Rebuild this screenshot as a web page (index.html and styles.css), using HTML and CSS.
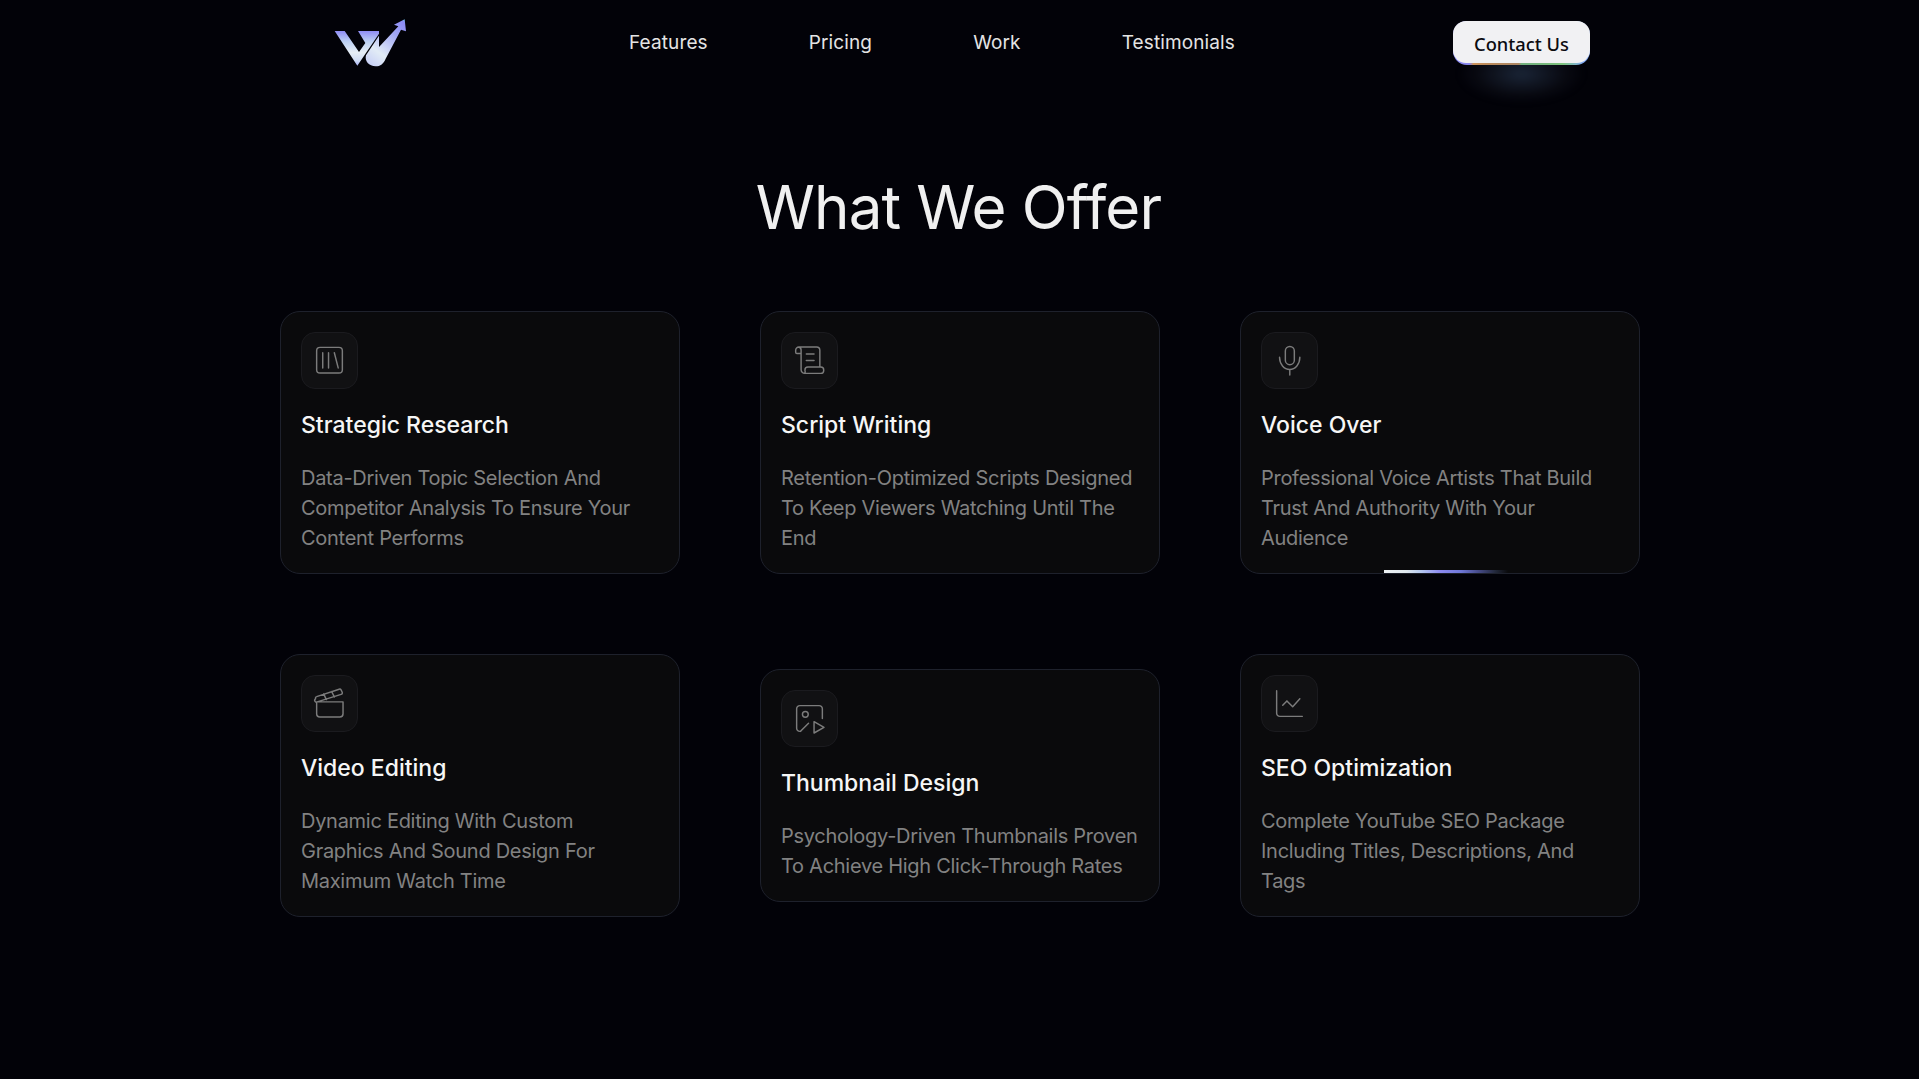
FILE: index.html
```html
<!DOCTYPE html>
<html lang="en">
<head>
<meta charset="utf-8">
<title>What We Offer</title>
<link rel="stylesheet" href="styles.css">
</head>
<body>
<header class="site-header">
  <a class="logo" href="#" aria-label="Home">
    <svg width="75" height="52" viewBox="100 50 225 156">
      <defs>
        <linearGradient id="lg" x1="0" y1="0" x2="0" y2="1">
          <stop offset="0" stop-color="#8f8cf5"/>
          <stop offset=".3" stop-color="#bcd0f2"/>
          <stop offset=".62" stop-color="#e6eef6"/>
          <stop offset=".85" stop-color="#cfdcf5"/>
          <stop offset="1" stop-color="#a9b2f6"/>
        </linearGradient>
        <linearGradient id="lg2" gradientUnits="userSpaceOnUse" x1="205" y1="198" x2="315" y2="57">
          <stop offset="0" stop-color="#c5cdf6"/>
          <stop offset=".3" stop-color="#e2ecf6"/>
          <stop offset=".7" stop-color="#a2a8f6"/>
          <stop offset=".95" stop-color="#8d8bf6"/>
          <stop offset="1" stop-color="#6cc4e8"/>
        </linearGradient>
      </defs>
      <polygon fill="url(#lg)" points="105,92 135,92 178,155 197,128 175,92 238,92 238,100 173,196"/>
      <path fill="url(#lg2)" d="M238 106V140L296 78 283 73 315 57 319 93 304 88 258 175C252 190 242 198 228 198C208 198 194 182 199 165Z"/>
    </svg>
  </a>
  <nav class="nav">
    <a href="#">Features</a>
    <a href="#">Pricing</a>
    <a href="#">Work</a>
    <a href="#">Testimonials</a>
  </nav>
  <a class="contact" href="#"><span class="contact-label">Contact Us</span></a>
</header>

<main class="offer">
  <h1 class="offer-title">What We Offer</h1>
  <section class="grid">
    <article class="card">
      <div class="icon-box">
        <svg class="icon" viewBox="0 0 30 30"><rect x="1.7" y="1.4" width="26.6" height="26.6" rx="3.5"/><path d="M8 7V22.7M14 7V22.7M20 7L24 22.7"/></svg>
      </div>
      <h2>Strategic Research</h2>
      <p>Data-Driven Topic Selection And Competitor Analysis To Ensure Your Content Performs</p>
    </article>
    <article class="card">
      <div class="icon-box">
        <svg class="icon" viewBox="0 0 30 30"><path d="M4 1H22.3A3.4 3.4 0 0 1 25.7 4.4V21.7M4 1A3.3 3.3 0 0 0 .7 4.3V6.5A1.3 1.3 0 0 0 2 7.8H6.3V4.3A3.3 3.3 0 0 0 4 1ZM6.3 7.8V24.6A3.7 3.7 0 0 0 10 28.3H26.7A3 3 0 0 0 29.7 25.3V24.7A3 3 0 0 0 26.7 21.7H13.3A3 3 0 0 0 10.3 24.7V25.3A3 3 0 0 1 10 28.3M11.7 8.3H19.7M11.7 15H19.7"/></svg>
      </div>
      <h2>Script Writing</h2>
      <p>Retention-Optimized Scripts Designed To Keep Viewers Watching Until The End</p>
    </article>
    <article class="card">
      <div class="icon-box">
        <svg class="icon" viewBox="0 0 30 30"><rect x="10.7" y="0.5" width="9.3" height="18.8" rx="4.65"/><path d="M4.7 11.7A10.5 12.6 0 0 0 25.7 11.7M15.3 24.3V30"/></svg>
      </div>
      <h2>Voice Over</h2>
      <p>Professional Voice Artists That Build Trust And Authority With Your Audience</p>
      <span class="progress"></span>
    </article>
    <article class="card">
      <div class="icon-box">
        <svg class="icon" viewBox="0 0 30 30"><path d="M1.7 13.3H29V25.7A3.3 3.3 0 0 1 25.7 29H5A3.3 3.3 0 0 1 1.7 25.7ZM.6 10.2A1.7 1.7 0 0 0 2.3 13.3L27 5.6A1.7 1.7 0 0 0 28 3L27 1A1.7 1.7 0 0 0 25 .2L1.7 7.9A1.7 1.7 0 0 0 .6 10.2ZM9 5L11.7 11M17.3 2.7L20 8.3"/></svg>
      </div>
      <h2>Video Editing</h2>
      <p>Dynamic Editing With Custom Graphics And Sound Design For Maximum Watch Time</p>
    </article>
    <article class="card">
      <div class="icon-box">
        <svg class="icon" viewBox="0 0 30 30"><path d="M28.3 15V5A3.3 3.3 0 0 0 25 1.7H5A3.3 3.3 0 0 0 1.7 5V25A3.3 3.3 0 0 0 5 28.3H6M5.7 28.3L14 20M19.7 18.3V30L30 24.3Z"/><circle cx="10.7" cy="10.7" r="3"/></svg>
      </div>
      <h2>Thumbnail Design</h2>
      <p>Psychology-Driven Thumbnails Proven To Achieve High Click-Through Rates</p>
    </article>
    <article class="card">
      <div class="icon-box">
        <svg class="icon" viewBox="0 0 30 30"><path d="M1.7 1.7V25A3.3 3.3 0 0 0 5 28.3H28.3M8 16.7L12.3 12.3L18.3 18.3L25.7 10"/></svg>
      </div>
      <h2>SEO Optimization</h2>
      <p>Complete YouTube SEO Package Including Titles, Descriptions, And Tags</p>
    </article>
  </section>
</main>
</body>
</html>
```

FILE: styles.css
```css
* { box-sizing: border-box; }
html, body { margin: 0; height: 100%; }
body {
  background: #020208;
  color: #fff;
  font-family: Inter, "Liberation Sans", sans-serif;
  overflow: hidden;
}
a { color: inherit; text-decoration: none; }

.site-header {
  display: flex;
  align-items: center;
  justify-content: space-between;
  width: 1257px;
  margin-left: 333px;
  height: 86px;
}
.logo { display: flex; }
.nav {
  display: flex;
  gap: 101px;
  margin: -2px 0 0 3px;
  font-size: 19px;
  font-weight: 400;
  letter-spacing: .12px;
  color: #e4e4e4;
}
.contact {
  position: relative;
  display: flex;
  align-items: center;
  justify-content: center;
  width: 137px;
  height: 44px;
  border-radius: 14px;
  padding: 0 0 2px;
  background: linear-gradient(90deg, #8d8bf6 0, #8d8bf6 12%, #e0a060 15%, #e0a060 48%, #8fe08a 50%, #8fe08a 80%, #80a8f5 95%);
}
.contact::before {
  content: "";
  position: absolute;
  left: 6px;
  right: 6px;
  top: 24px;
  height: 58px;
  background: radial-gradient(ellipse at center, rgba(60,85,120,.42), rgba(40,46,60,.18) 50%, transparent 72%);
  filter: blur(3px);
}
.contact-label {
  position: relative;
  display: flex;
  align-items: center;
  justify-content: center;
  width: 100%;
  height: 100%;
  padding-top: 2px;
  border-radius: 13px;
  background: #f1f1f3;
  color: #0b0b10;
  font-family: "Noto Sans", sans-serif;
  font-weight: 500;
  font-size: 18.3px;
}

.offer-title {
  margin: 84px 0 0;
  text-align: center;
  font-size: 60px;
  font-weight: 400;
  line-height: 74px;
  letter-spacing: -.85px;
  padding-right: 2px;
  color: #f0f0f0;
}
.grid {
  display: grid;
  grid-template-columns: repeat(3, 400px);
  column-gap: 80px;
  row-gap: 80px;
  align-items: center;
  justify-content: start;
  margin: 67px 0 0 280px;
}
.card {
  position: relative;
  padding: 20px;
  background: #0a0a0c;
  border: 1px solid #1e212c;
  border-radius: 20px;
}
.icon-box {
  display: flex;
  align-items: center;
  justify-content: center;
  width: 57px;
  height: 57px;
  background: #111113;
  border: 1px solid #1b1b1f;
  border-radius: 14px;
}
.icon {
  width: 29px;
  height: 29px;
  overflow: visible;
  fill: none;
  stroke: #7c7c7c;
  stroke-width: 1.5;
  stroke-linecap: round;
  stroke-linejoin: round;
}
.card h2 {
  margin: 20px 0 22px;
  font-size: 23px;
  line-height: 32px;
  font-weight: 500;
  color: #f6f6f6;
}
.card p {
  margin: 0;
  font-size: 20px;
  line-height: 30px;
  letter-spacing: -.28px;
  color: #828282;
}
.progress {
  position: absolute;
  left: 143px;
  bottom: 0;
  width: 124px;
  height: 3px;
  background: linear-gradient(90deg, #eef2f4 0, #dfe8ee 18%, #b5c8f0 30%, #8d8bf0 45%, #6f78d8 62%, #4a4f90 75%, #22283a 90%, transparent 100%);
}
```
